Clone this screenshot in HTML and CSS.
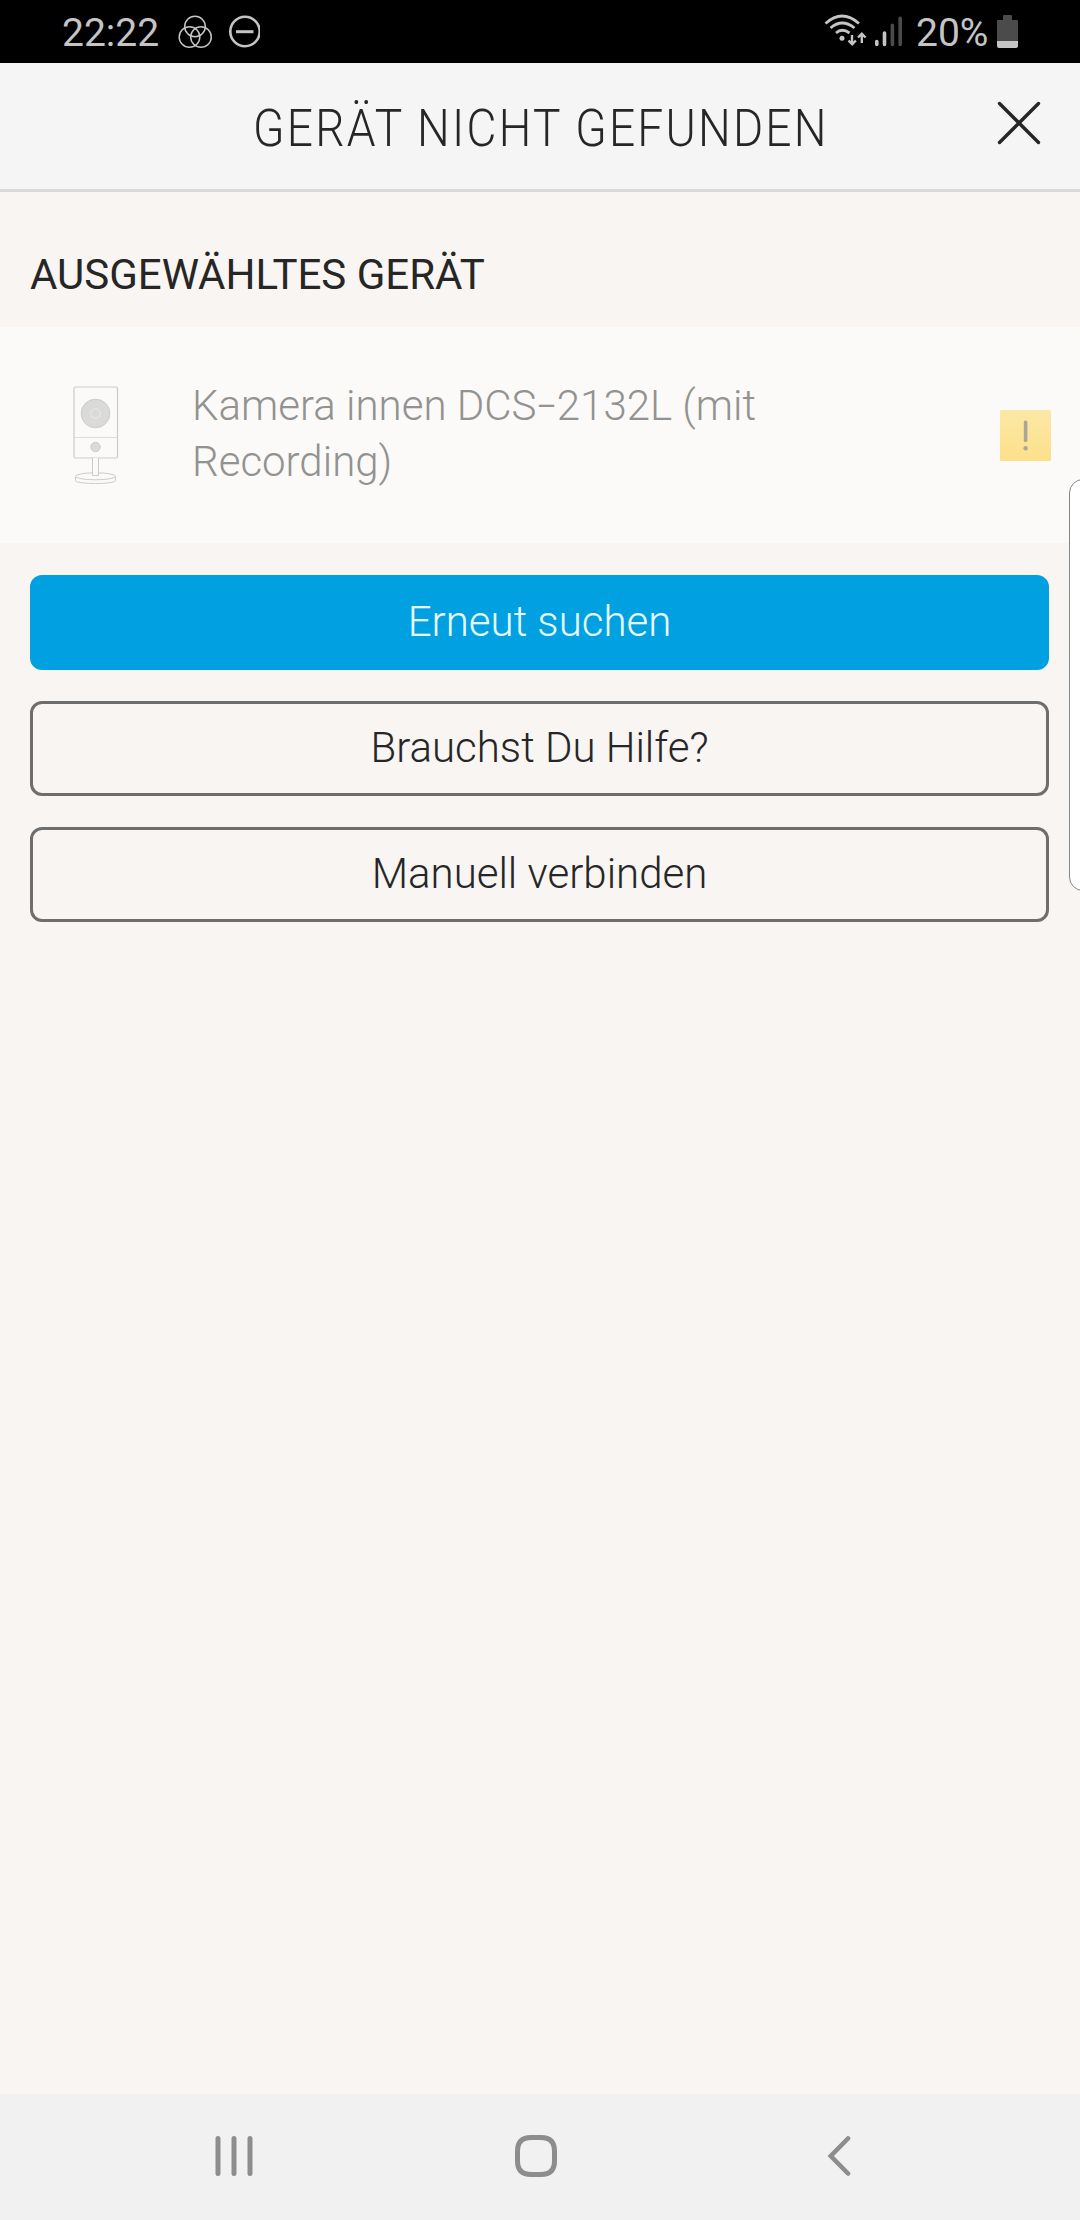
FILE: index.html
```html
<!DOCTYPE html>
<html lang="de">
<head>
  <meta charset="utf-8">
  <title>Gerät nicht gefunden</title>
  <meta name="viewport" content="width=device-width, initial-scale=1">
  <link rel="stylesheet" href="styles.css">
</head>
<body>
  <div class="status-bar">
    <span class="clock">22:22</span>
    <svg class="status-left" width="84" height="36" viewBox="176 14 84 36" fill="none" stroke="#c4c4c4">
      <g stroke-width="1.5">
        <circle cx="195" cy="26.5" r="10.3"/>
        <circle cx="189.5" cy="37" r="10.3"/>
        <circle cx="201" cy="37" r="10.3"/>
      </g>
      <circle cx="245" cy="31.5" r="14.7" stroke-width="2.6"/>
      <path d="M236 31.7h17.5" stroke-width="3"/>
    </svg>
    <svg class="status-signal" width="80" height="36" viewBox="824 12 80 36" fill="none" stroke="#c4c4c4" stroke-width="2.8">
      <path d="M825.5 23.5Q842 8.500 859 23.500M830.500 28Q842 18 854.500 28M836 33Q842 27.500 849.500 33"/>
      <circle cx="842" cy="38.300" r="2.500" fill="#c4c4c4" stroke="none"/>
      <path d="M852 35v9M848.500 40.500l3.700 3.700 3.700-3.700M861.800 43v-9M858 37.500l3.800-3.800 3.800 3.800" stroke-width="2.400"/>
      <g stroke-width="3.600" stroke-linecap="round">
        <path d="M876.800 41.500v3M884.500 33v11.500"/>
        <path d="M892.400 25.200v19.300M900.200 18.400v26.100" stroke="#4b4b4b"/>
      </g>
    </svg>
    <span class="charge">20%</span>
    <svg class="battery" width="21" height="33" viewBox="0 0 21 33">
      <path d="M6 1q0-1 1-1h7q1 0 1 1v4h5q1 0 1 1v20H0V6q0-1 1-1h5z" fill="#4b4b4b"/>
      <path d="M0 26h21v5q0 2-2 2H2q-2 0-2-2z" fill="#c4c4c4"/>
    </svg>
  </div>

  <header class="header">
    <h1 class="title">GERÄT NICHT GEFUNDEN</h1>
    <a href="#" class="close" aria-label="Schließen">
      <svg width="44" height="44" viewBox="0 0 44 44" fill="none" stroke="#262626" stroke-width="3.4" stroke-linecap="round">
        <path d="M2.500 2.500l39 39M41.500 2.500l-39 39"/>
      </svg>
    </a>
  </header>

  <main class="content">
    <h2 class="section-title">AUSGEWÄHLTES GERÄT</h2>

    <div class="device">
      <svg class="camera" width="46" height="98" viewBox="0 0 46 98" fill="none" stroke="#cbcbca">
        <rect x="1" y="1" width="43.500" height="71" rx="1.500" stroke-width="1.200"/>
        <path d="M1 51.500h43.500" stroke="#dcdcdb"/>
        <circle cx="22.500" cy="27.500" r="14.300" fill="#dadad9"/>
        <circle cx="22.500" cy="27.500" r="4.800" stroke="#ececeb"/>
        <circle cx="22.500" cy="61" r="4.700" fill="#dadad9"/>
        <ellipse cx="22.500" cy="90.300" rx="20" ry="3.500"/>
        <path d="M2.500 90.500v4.500c3 3.300 37 3.300 40 0v-4.500"/>
        <path d="M19.500 72v17.500h6V72" fill="#fbfaf8"/>
      </svg>
      <p class="device-name">Kamera innen DCS<span class="dash">–</span>2132L (mit Recording)</p>
      <svg class="warning" width="51" height="51" viewBox="0 0 51 51">
        <defs>
          <linearGradient id="amber" x2="0" y2="1">
            <stop stop-color="#fce8a6"/>
            <stop offset="1" stop-color="#fce18a"/>
          </linearGradient>
        </defs>
        <rect width="51" height="51" rx="1.500" fill="url(#amber)"/>
        <rect x="23.800" y="10.500" width="3.600" height="21.500" rx="1.500" fill="#aaa698"/>
        <circle cx="25.600" cy="38.200" r="2.200" fill="#aaa698"/>
      </svg>
    </div>

    <div class="actions">
      <a href="#" class="btn btn-primary">Erneut suchen</a>
      <a href="#" class="btn">Brauchst Du Hilfe?</a>
      <a href="#" class="btn">Manuell verbinden</a>
    </div>
  </main>

  <div class="edge-handle"></div>

  <nav class="nav-bar">
    <svg width="38" height="42" viewBox="0 0 38 42" fill="none" stroke="#8d8d8d" stroke-width="5" stroke-linecap="round">
      <path d="M3 3.500v35M19 3.500v35M35 3.500v35"/>
    </svg>
    <svg class="home" width="42" height="42" viewBox="0 0 42 42" fill="none" stroke="#8d8d8d" stroke-width="5">
      <path d="M16 2.500h10q13.500 0 13.500 13.500v10q0 13.500-13.500 13.500H16Q2.500 39.500 2.500 26V16Q2.500 2.500 16 2.500z"/>
    </svg>
    <svg width="24" height="42" viewBox="0 0 24 42" fill="none" stroke="#8d8d8d" stroke-width="4.600" stroke-linecap="round">
      <path d="M21 3.500L3.800 21 21 38.500"/>
    </svg>
  </nav>
</body>
</html>
```
FILE: styles.css
```css
* {
  box-sizing: border-box;
}

body {
  margin: 0;
  height: 2220px;
  display: flex;
  flex-direction: column;
  position: relative;
  overflow: hidden;
  font-family: Roboto, sans-serif;
  font-size: 42px;
  font-weight: 300;
  color: #262626;
  background-color: #f8f5f2;
}

svg {
  display: block;
  flex: none;
}

a {
  color: inherit;
  text-decoration: none;
}

.status-bar {
  height: 63px;
  display: flex;
  align-items: flex-start;
  padding: 0 62px;
  font-size: 39px;
  font-weight: 400;
  line-height: 67px;
  color: #c4c4c4;
  background-color: #000;
}

.clock {
  width: 114px;
}

.status-left {
  margin-top: 14px;
}

.status-signal {
  margin-top: 12px;
  margin-left: auto;
}

.charge {
  width: 81px;
  margin-left: 12px;
}

.battery {
  margin-top: 15px;
}

.header {
  height: 129px;
  display: grid;
  grid-template-columns: 120px 1fr 120px;
  align-items: start;
  border-bottom: 3px solid #d9d9d9;
  background-color: #f5f5f5;
}

.title {
  grid-column: 2;
  margin: 0;
  padding-left: 2px;
  font-size: 52px;
  font-weight: 300;
  line-height: 131px;
  letter-spacing: 2.5px;
  text-align: center;
  white-space: nowrap;
  transform: scaleX(0.886);
}

.close {
  padding: 38px 0 0 37px;
}

.content {
  flex: 1;
}

.section-title {
  margin: 0;
  height: 135px;
  padding-left: 30px;
  font-size: 42px;
  font-weight: 400;
  line-height: 165px;
}

.device {
  height: 216px;
  display: flex;
  align-items: center;
  padding: 0 29px 0 73px;
  background-color: #fbfaf8;
}

.device-name {
  flex: 1;
  margin: 0 200px 2px 73px;
  line-height: 56px;
  color: #929290;
}

.dash {
  font-size: 31px;
  font-weight: 400;
  line-height: 1;
  vertical-align: 3px;
}

.actions {
  display: flex;
  flex-direction: column;
  gap: 31px;
  padding: 32px 31px 0 30px;
}

.btn {
  height: 95px;
  border: 3px solid #6e6e6e;
  border-radius: 12px;
  line-height: 87px;
  text-align: center;
}

.btn-primary {
  border-color: #00a0e1;
  color: #e9fbff;
  background-color: #00a0e1;
}

/* sits over the page at the right screen edge */
.edge-handle {
  position: absolute;
  top: 479px;
  right: -20px;
  width: 31px;
  height: 412px;
  border: 1px solid #858585;
  border-radius: 14px;
  background-color: #fff;
}

.nav-bar {
  height: 126px;
  display: flex;
  align-items: center;
  justify-content: space-between;
  padding: 0 229px 2px 215px;
  background-color: #f1f1f1;
}

.home {
  margin-right: 8px;
}
```
